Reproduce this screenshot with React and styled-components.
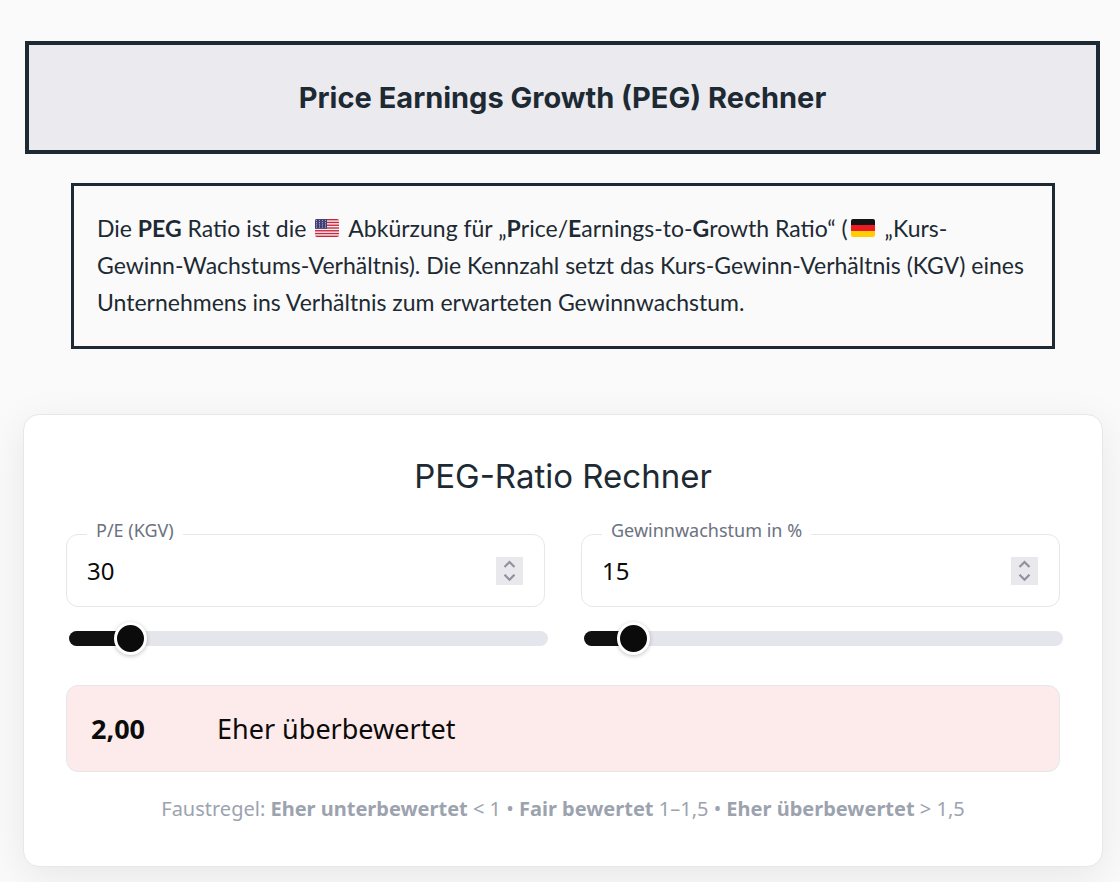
import React, { useState } from 'react';
import styled, { createGlobalStyle } from 'styled-components';

const formatNumber = (value) =>
    value.toLocaleString('de-DE', {
        minimumFractionDigits: 2,
        maximumFractionDigits: 2,
    });

const rate = (peg) => {
    if (peg < 1) return { text: 'Eher unterbewertet', color: '#e9f8ef' };
    if (peg <= 1.5) return { text: 'Fair bewertet', color: '#fdf6e3' };
    return { text: 'Eher überbewertet', color: '#fcebea' };
};

const FlagUS = () => (
    <Flag viewBox="0 0 24 18" role="img" aria-label="USA">
        <clipPath id="us">
            <rect width="24" height="18" rx="2" />
        </clipPath>
        <g clipPath="url(#us)">
            <rect width="24" height="18" fill="#f5f0f2" />
            {[0, 1, 2, 3, 4, 5, 6].map((i) => (
                <rect
                    key={i}
                    y={i * 2.77}
                    width="24"
                    height="1.39"
                    fill="#c8283f"
                />
            ))}
            <rect width="12" height="9.7" fill="#3f3f78" />
            {[1.5, 3.7, 5.9, 8.1].map((y) =>
                [1.5, 4.5, 7.5, 10.5].map((x) => (
                    <circle
                        key={`${x}-${y}`}
                        cx={x}
                        cy={y}
                        r="0.6"
                        fill="#b9b9d2"
                    />
                ))
            )}
        </g>
    </Flag>
);

const FlagDE = () => (
    <Flag viewBox="0 0 24 18" role="img" aria-label="Deutschland">
        <clipPath id="de">
            <rect width="24" height="18" rx="2" />
        </clipPath>
        <g clipPath="url(#de)">
            <rect width="24" height="6" fill="#141414" />
            <rect y="6" width="24" height="6" fill="#ed1c24" />
            <rect y="12" width="24" height="6" fill="#ffce05" />
        </g>
    </Flag>
);

const NumberField = ({ id, label, value, max, onChange }) => {
    const update = (next) => onChange(Math.min(max, Math.max(1, next)));
    const share = value / max;

    return (
        <div>
            <Field>
                <Label htmlFor={id}>{label}</Label>
                <NumberInput
                    id={id}
                    type="number"
                    min="1"
                    max={max}
                    value={value}
                    onChange={(e) => update(Number(e.target.value))}
                />
                <Spinner>
                    <SpinButton
                        type="button"
                        aria-label={`${label} erhöhen`}
                        onClick={() => update(value + 1)}
                    >
                        <svg width="13" height="8" viewBox="0 0 13 8">
                            <path d="M1.5 7 6.5 2l5 5" />
                        </svg>
                    </SpinButton>
                    <SpinButton
                        type="button"
                        aria-label={`${label} verringern`}
                        onClick={() => update(value - 1)}
                    >
                        <svg width="13" height="8" viewBox="0 0 13 8">
                            <path d="M1.5 0.7l5 5 5-5" />
                        </svg>
                    </SpinButton>
                </Spinner>
            </Field>
            <Slider
                type="range"
                aria-label={label}
                min="0"
                max={max}
                value={value}
                style={{ '--fill': `${share * 100}%` }}
                onChange={(e) => update(Number(e.target.value))}
            />
        </div>
    );
};

const App = () => {
    const [pe, setPe] = useState(30);
    const [growth, setGrowth] = useState(15);

    const peg = pe / growth;
    const rating = rate(peg);

    return (
        <Page>
            <GlobalStyle />
            <Banner>
                <h1>Price Earnings Growth (PEG) Rechner</h1>
            </Banner>
            <Info>
                Die <b>PEG</b> Ratio ist die <FlagUS /> Abkürzung für „<b>P</b>
                rice/<b>E</b>arnings-to-<b>G</b>rowth Ratio“ (<FlagDE /> „Kurs-
                <br />
                Gewinn-Wachstums-Verhältnis). Die Kennzahl setzt das
                Kurs-Gewinn-Verhältnis (KGV) eines Unternehmens ins Verhältnis
                zum erwarteten Gewinnwachstum.
            </Info>
            <Card>
                <h2>PEG-Ratio Rechner</h2>
                <Fields>
                    <NumberField
                        id="pe"
                        label="P/E (KGV)"
                        value={pe}
                        max={300}
                        onChange={setPe}
                    />
                    <NumberField
                        id="growth"
                        label="Gewinnwachstum in %"
                        value={growth}
                        max={200}
                        onChange={setGrowth}
                    />
                </Fields>
                <Result $color={rating.color}>
                    <strong>{formatNumber(peg)}</strong>
                    <span>{rating.text}</span>
                </Result>
                <Rule>
                    Faustregel: <b>Eher unterbewertet</b> &lt; 1 •{' '}
                    <b>Fair bewertet</b> 1–1,5 • <b>Eher überbewertet</b> &gt;
                    1,5
                </Rule>
            </Card>
        </Page>
    );
};

const GlobalStyle = createGlobalStyle`
    * {
        box-sizing: border-box;
    }

    body {
        margin: 0;
        background: #fafafa;
        color: #1d2a33;
        font-family: 'Noto Sans', sans-serif;
    }

    h1, h2, p {
        margin: 0;
    }
`;

const Page = styled.main`
    padding: 41px 17px 15px 23px;
`;

const Banner = styled.header`
    margin: 0 3px 0 2px;
    padding: 34px 24px;
    background: #ebeaef;
    border: 4px solid #1d2a33;
    text-align: center;

    h1 {
        font: 700 29px/37px Inter, sans-serif;
    }
`;

const Info = styled.p`
    && {
        margin: 29px 48px 0;
    }
    padding: 24px 23px 25px;
    border: 3px solid #1d2a33;
    font: 400 23px/37px Lato, sans-serif;
`;

const Flag = styled.svg`
    width: 24px;
    height: 18px;
    margin: 0 4px 0 3px;
    vertical-align: 0;
`;

const Card = styled.section`
    margin-top: 65px;
    padding: 41px 42px;
    background: #fff;
    border: 1px solid #e5e7eb;
    border-radius: 16px;
    box-shadow: 0 10px 40px rgba(0, 0, 0, 0.08);

    h2 {
        font: 400 33px/40px Inter, sans-serif;
        text-align: center;
    }
`;

const Fields = styled.div`
    display: grid;
    grid-template-columns: 1fr 1fr;
    gap: 36px;
    margin-top: 38px;
`;

const Field = styled.div`
    position: relative;
    display: flex;
    align-items: center;
    height: 73px;
    padding: 0 21px 0 20px;
    border: 1px solid #e5e7eb;
    border-radius: 12px;
`;

const Label = styled.label`
    position: absolute;
    top: -17px;
    left: 20px;
    padding: 0 9px;
    background: #fff;
    color: #6b7280;
    font: 400 18px/24px 'Noto Sans', sans-serif;
`;

const NumberInput = styled.input`
    flex: 1;
    min-width: 0;
    padding: 0;
    border: 0;
    outline: 0;
    background: none;
    color: #0b0b0b;
    font: 400 24px/32px 'Noto Sans', sans-serif;
    appearance: textfield;

    &::-webkit-inner-spin-button {
        display: none;
    }
`;

const Spinner = styled.div`
    display: grid;
    width: 27px;
    height: 28px;
    background: #e8e8ed;
`;

const SpinButton = styled.button`
    display: grid;
    place-items: center;
    padding: 0;
    border: 0;
    background: none;
    cursor: pointer;

    path {
        fill: none;
        stroke: #92929f;
        stroke-width: 2.2;
    }
`;

const Slider = styled.input`
    display: block;
    width: 100%;
    height: 33px;
    margin: 15px 0 0 3px;
    background: none;
    appearance: none;
    cursor: pointer;

    &::-webkit-slider-runnable-track {
        height: 15px;
        border-radius: 8px;
        background: linear-gradient(
            to right,
            #111 var(--fill),
            #e5e6eb var(--fill)
        );
    }

    &::-webkit-slider-thumb {
        width: 33px;
        height: 33px;
        margin-top: -9px;
        border: 3px solid #fff;
        border-radius: 50%;
        background: #0b0b0b;
        box-shadow: 0 1px 4px rgba(0, 0, 0, 0.25);
        appearance: none;
    }
`;

const Result = styled.output`
    display: flex;
    align-items: center;
    gap: 24px;
    margin-top: 30px;
    padding: 23px 24px;
    background: ${(props) => props.$color};
    border: 1px solid #e5e7eb;
    border-radius: 12px;
    color: #0b0b0b;
    font-size: 27px;
    line-height: 39px;

    strong {
        min-width: 102px;
    }
`;

const Rule = styled.p`
    && {
        margin-top: 21px;
    }
    color: #9ca3af;
    font-size: 20px;
    line-height: 32px;
    text-align: center;
`;

export default App;
